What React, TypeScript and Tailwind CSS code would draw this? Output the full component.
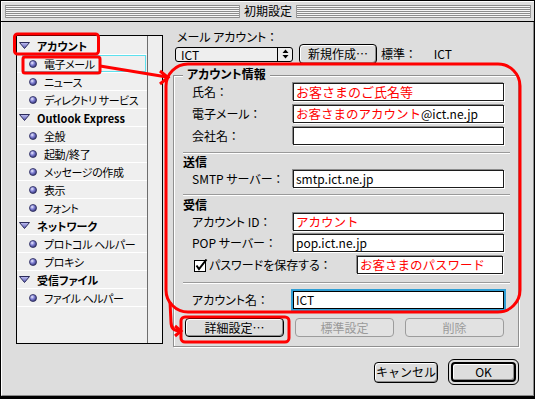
import React from "react";

const groups = [
  { title: "アカウント", items: ["電子メール", "ニュース", "ディレクトリ サービス"] },
  { title: "Outlook Express", items: ["全般", "起動/終了", "メッセージの作成", "表示", "フォント"] },
  { title: "ネットワーク", items: ["プロトコル ヘルパー", "プロキシ"] },
  { title: "受信ファイル", items: ["ファイル ヘルパー"] },
];

function Stripes() {
  return (
    <div className="flex-1 h-[13px] border-x border-[#9a9a9a] bg-[image:repeating-linear-gradient(to_bottom,#8c8c8c_0px,#8c8c8c_1px,#f6f6f6_1px,#f6f6f6_2px)]" />
  );
}

function Triangle() {
  return (
    <svg width="11" height="7" viewBox="0 0 11 7" className="shrink-0">
      <defs>
        <linearGradient id="tri" x1="0" y1="0" x2="0" y2="1">
          <stop offset="0" stopColor="#c4c4f4" />
          <stop offset="1" stopColor="#5656b0" />
        </linearGradient>
      </defs>
      <path d="M0.5 0.5 H10.5 L5.5 6.5 Z" fill="url(#tri)" stroke="#2c2c5c" strokeWidth="1" />
    </svg>
  );
}

function Ball() {
  return (
    <svg width="8" height="8" viewBox="0 0 8 8" className="shrink-0">
      <defs>
        <radialGradient id="ball" cx="0.38" cy="0.35" r="0.7">
          <stop offset="0" stopColor="#eeeeff" />
          <stop offset="0.45" stopColor="#8080d4" />
          <stop offset="1" stopColor="#2e2e70" />
        </radialGradient>
      </defs>
      <circle cx="4" cy="4" r="3.5" fill="url(#ball)" stroke="#2a2a58" strokeWidth="0.8" />
    </svg>
  );
}

function Input({ children, w = "w-[211px]" }: { children?: React.ReactNode; w?: string }) {
  return (
    <div
      className={`${w} h-[18px] bg-white border border-[#1c1c1c] shadow-[-1px_-1px_0_#8c8c8c,1px_1px_0_#ffffff] flex items-center pl-[2px] text-[12px] whitespace-nowrap overflow-hidden`}
    >
      {children}
    </div>
  );
}

function Field({ label, children, mt }: { label: string; children?: React.ReactNode; mt: string }) {
  return (
    <div className={`flex items-center h-[18px] ${mt}`}>
      <div className="w-[119px] pl-[18px] text-[12px] leading-[14px] whitespace-nowrap">{label}</div>
      <Input>{children}</Input>
    </div>
  );
}

function Separator({ mt }: { mt: string }) {
  return <div className={`ml-[9px] w-[327px] h-[2px] border-t border-[#9a9a9a] bg-white ${mt}`} />;
}

function Button({ children, disabled }: { children: React.ReactNode; disabled?: boolean }) {
  return (
    <div
      className={
        disabled
          ? "w-[99px] h-[19px] rounded-[4px] border border-[#9c9c9c] bg-[#e2e2e2] text-[#9a9a9a] flex items-center justify-center text-[12px]"
          : "w-[99px] h-[19px] rounded-[4px] border border-black bg-[#dddddd] shadow-[inset_1px_1px_0_#ffffff,inset_-1px_-1px_0_#8e8e8e] flex items-center justify-center text-[12px]"
      }
    >
      {children}
    </div>
  );
}

function Annotations() {
  return (
    <svg
      width="535"
      height="399"
      viewBox="0 0 535 399"
      className="absolute left-[-1px] top-[-1px] pointer-events-none"
      fill="none"
      stroke="#ff0000"
      strokeWidth="3"
    >
      <rect x="14.5" y="34" width="84" height="20" rx="3" />
      <rect x="23" y="57" width="77" height="16" rx="2" />
      <path d="M100 66 L167 77" />
      <path d="M160 71 L168 77.5 L160 84" />
      <rect x="166" y="64" width="354" height="248" rx="22" />
      <path d="M170 302 L171 322 Q171 331 180 331" />
      <path d="M175 326 L181 331 L175 336" />
      <rect x="181" y="317" width="108" height="25" rx="4" />
    </svg>
  );
}

export default function App() {
  return (
    <div className="relative w-[535px] h-[399px] bg-[#dddddd] border border-black border-b-[3px] text-black font-['Noto_Sans_CJK_JP',sans-serif] [font-feature-settings:'palt'] overflow-hidden">
      {/* title bar */}
      <div className="h-[21px] flex items-center pl-[4px] pr-[3px] border-b border-black shadow-[inset_1px_1px_0_#ffffff]">
        <Stripes />
        <div className="px-[4px] text-[12px] leading-[14px] [font-feature-settings:normal]">初期設定</div>
        <Stripes />
      </div>

      {/* body */}
      <div className="h-[374px] border-l border-white border-r border-r-[#8a8a8a] border-b border-b-[#8a8a8a]">
        <div className="flex pt-[8px]">
          {/* category list */}
          <div className="ml-[14px] mt-[5px] w-[147px] h-[309px] border border-black bg-[#efefef] flex">
            <div className="w-[130px] pt-[1px] whitespace-nowrap overflow-hidden">
              {groups.map((g) => (
                <div key={g.title}>
                  <div className="h-[18px] border-b border-white flex items-center pl-[2px]">
                    <Triangle />
                    <span className="ml-[7px] text-[11px] font-bold leading-[14px]">{g.title}</span>
                  </div>
                  {g.items.map((it) =>
                    it === "電子メール" ? (
                      <div key={it} className="h-[18px] border-b border-white pl-[5px] pr-[1px]">
                        <div className="h-[17px] border border-[#5ce0ee] flex items-center pl-[6px]">
                          <Ball />
                          <span className="ml-[7px] text-[11px] tracking-[-0.4px] leading-[14px]">{it}</span>
                        </div>
                      </div>
                    ) : (
                      <div key={it} className="h-[18px] border-b border-white flex items-center pl-[12px]">
                        <Ball />
                        <span className="ml-[7px] text-[11px] tracking-[-0.4px] leading-[14px]">{it}</span>
                      </div>
                    )
                  )}
                </div>
              ))}
            </div>
            <div className="flex-1 border-l border-[#6e6e6e] bg-[#eeeeee]" />
          </div>

          {/* right side */}
          <div className="ml-[10px] w-[346px] flex flex-col">
            <div className="h-[14px] pl-[4px] text-[12px] leading-[14px]">メール アカウント ：</div>
            <div className="h-[20px] flex items-center">
              <div className="ml-[2px] w-[118px] h-[15px] rounded-[3px] border border-black bg-[#eeeeee] flex items-center text-[12px]">
                <span className="flex-1 pl-[5px] leading-[13px]">ICT</span>
                <div className="w-[15px] h-full border-l border-black flex items-center justify-center">
                  <svg width="7" height="10" viewBox="0 0 7 10">
                    <path d="M3.5 0.5 L6.5 4 H0.5 Z M3.5 9.5 L6.5 6 H0.5 Z" fill="#000" />
                  </svg>
                </div>
              </div>
              <div className="ml-[6px] w-[78px] h-[20px] rounded-[4px] border border-black bg-[#dddddd] shadow-[inset_1px_1px_0_#ffffff,inset_-1px_-1px_0_#8e8e8e] flex items-center justify-center text-[12px]">
                新規作成…
              </div>
              <span className="ml-[4px] text-[12px]">標準 ：</span>
              <span className="ml-[20px] text-[12px]">ICT</span>
            </div>

            {/* account group */}
            <div className="relative mt-[11px] w-[346px] h-[272px] border border-[#8f8f8f] shadow-[inset_1px_1px_0_#ffffff,1px_1px_0_#ffffff] flex flex-col">
              <div className="absolute left-[9px] top-[-9px] px-[4px] bg-[#dddddd] text-[12px] font-bold leading-[14px]">
                アカウント情報
              </div>
              <Field label="氏名 ：" mt="mt-[7px]">
                <span className="text-[13px] text-[#ff0000] [font-feature-settings:normal]">お客さまのご氏名等</span>
              </Field>
              <Field label="電子メール ：" mt="mt-[4px]">
                <span className="text-[12.5px] text-[#ff0000] [font-feature-settings:normal]">お客さまのアカウント</span>
                <span>@ict.ne.jp</span>
              </Field>
              <Field label="会社名 ：" mt="mt-[4px]" />
              <Separator mt="mt-[7px]" />
              <div className="mt-[1px] pl-[9px] h-[14px] text-[12px] font-bold leading-[14px]">送信</div>
              <Field label="SMTP サーバー ：" mt="mt-[1px]">
                smtp.ict.ne.jp
              </Field>
              <Separator mt="mt-[6px]" />
              <div className="mt-[2px] pl-[9px] h-[14px] text-[12px] font-bold leading-[14px]">受信</div>
              <Field label="アカウント ID ：" mt="mt-[1px]">
                <span className="text-[12.5px] text-[#ff0000] [font-feature-settings:normal]">アカウント</span>
              </Field>
              <Field label="POP サーバー ：" mt="mt-[3px]">
                pop.ict.ne.jp
              </Field>
              <div className="mt-[4px] h-[18px] flex items-center">
                <div className="w-[183px] pl-[20px] flex items-center whitespace-nowrap">
                  <svg width="14" height="13" viewBox="0 0 14 13" className="shrink-0">
                    <rect x="0.5" y="1.5" width="11" height="11" fill="#ffffff" stroke="#000" />
                    <path d="M2.5 6.5 L5 10 L12.5 0.5" stroke="#000" strokeWidth="2" fill="none" />
                  </svg>
                  <span className="ml-[1px] text-[12px] leading-[14px]">パスワードを保存する ：</span>
                </div>
                <Input w="w-[146px]">
                  <span className="text-[12.5px] text-[#ff0000] [font-feature-settings:normal]">お客さまのパスワード</span>
                </Input>
              </div>
              <Separator mt="mt-[8px]" />
              <div className="mt-[7px] h-[18px] flex items-center">
                <div className="w-[119px] pl-[18px] text-[12px] leading-[14px]">アカウント名 ：</div>
                <div className="w-[211px] h-[18px] bg-white border border-black shadow-[0_0_0_2px_#2f9ed4] flex items-center pl-[2px] text-[12px]">
                  ICT
                </div>
              </div>
              <div className="mt-[9px] ml-[11px] flex gap-[11px]">
                <Button>詳細設定…</Button>
                <Button disabled>標準設定</Button>
                <Button disabled>削除</Button>
              </div>
            </div>

            {/* dialog buttons */}
            <div className="mt-[12px] flex items-center justify-end">
              <div className="mr-[10px] w-[64px] h-[21px] rounded-[4px] border border-black bg-[#dddddd] shadow-[inset_1px_1px_0_#ffffff,inset_-1px_-1px_0_#8e8e8e] flex items-center justify-center text-[12px] [font-feature-settings:normal]">
                キャンセル
              </div>
              <div className="w-[71px] h-[26px] rounded-[6px] border border-black bg-[#dddddd] p-[2px]">
                <div className="w-full h-full rounded-[4px] border-2 border-black bg-[#dddddd] shadow-[inset_1px_1px_0_#ffffff,inset_-1px_-1px_0_#8e8e8e] flex items-center justify-center text-[12px]">
                  OK
                </div>
              </div>
            </div>
          </div>
        </div>
      </div>

      <Annotations />
    </div>
  );
}
